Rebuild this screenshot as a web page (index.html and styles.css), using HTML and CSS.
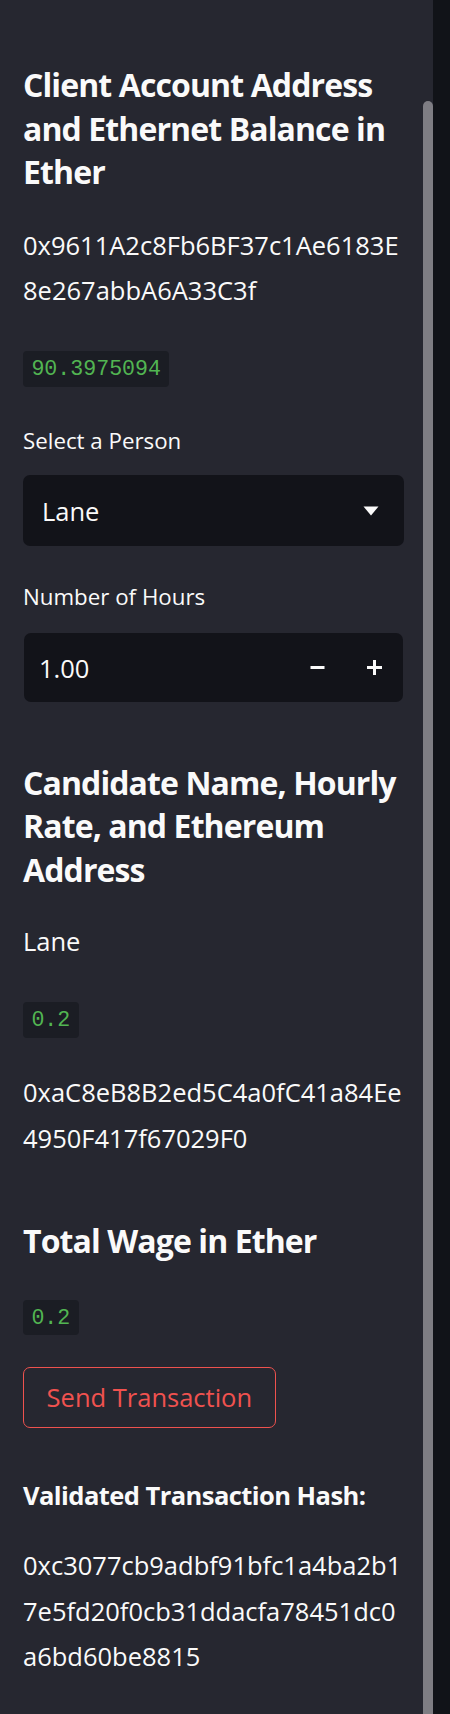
FILE: index.html
```html
<!DOCTYPE html>
<html lang="en">
<head>
<meta charset="utf-8">
<title>Client Account</title>
<link rel="stylesheet" href="styles.css">
</head>
<body>
<div class="app">
  <aside class="sidebar">
    <div class="sidebar-content">
      <h2 class="heading heading-first">Client Account Address<br>and Ethernet Balance in<br>Ether</h2>
      <p class="text addr addr-first">0x9611A2c8Fb6BF37c1Ae6183E<br>8e267abbA6A33C3f</p>
      <div class="code-line code-first"><code class="code">90.3975094</code></div>

      <label class="label label-person">Select a Person</label>
      <div class="select">
        <span class="select-value">Lane</span>
        <svg class="caret" width="16" height="10" viewBox="0 0 16 10"><path d="M0.5 0.5 H15.5 L8 9.5 Z" fill="#fafafa"/></svg>
      </div>

      <label class="label label-hours">Number of Hours</label>
      <div class="number">
        <span class="number-value">1.00</span>
        <span class="step"><svg width="15" height="15" viewBox="0 0 15 15"><rect x="0.5" y="6" width="14" height="3" fill="#fafafa"/></svg></span>
        <span class="step"><svg width="15" height="15" viewBox="0 0 15 15"><rect x="0" y="6" width="15" height="3" fill="#fafafa"/><rect x="6" y="0" width="3" height="15" fill="#fafafa"/></svg></span>
      </div>

      <h2 class="heading heading-candidate">Candidate Name, Hourly<br>Rate, and Ethereum<br>Address</h2>
      <p class="text name">Lane</p>
      <div class="code-line code-rate"><code class="code">0.2</code></div>
      <p class="text addr addr-candidate">0xaC8eB8B2ed5C4a0fC41a84Ee<br>4950F417f67029F0</p>

      <h2 class="heading heading-wage">Total Wage in Ether</h2>
      <div class="code-line code-wage"><code class="code">0.2</code></div>
      <button class="btn" type="button">Send Transaction</button>

      <p class="text strong">Validated Transaction Hash:</p>
      <p class="text addr hash">0xc3077cb9adbf91bfc1a4ba2b1<br>7e5fd20f0cb31ddacfa78451dc0<br>a6bd60be8815</p>
    </div>
    <div class="scroll-track"><div class="scroll-thumb"></div></div>
  </aside>
  <main class="main"></main>
</div>
</body>
</html>
```

FILE: styles.css
```css
* { box-sizing: border-box; }

html, body {
  margin: 0;
  padding: 0;
  background: #111318;
}

.app {
  display: flex;
  width: 450px;
  height: 1714px;
  overflow: hidden;
}

.sidebar {
  width: 433px;
  height: 100%;
  background: #262730;
  display: flex;
}

.sidebar-content {
  flex: 1;
  display: flex;
  flex-direction: column;
  align-items: flex-start;
  padding: 63px 19px 0 23px;
  color: #fafafa;
  font-family: "Open Sans", "Noto Sans", sans-serif;
  font-size: 25.5px;
}

.scroll-track {
  width: 10px;
  display: flex;
  flex-direction: column;
}

.scroll-thumb {
  margin-top: 101px;
  flex: 1;
  background: #7e7d83;
  border-radius: 5px 5px 0 0;
}

.main {
  flex: 1;
  background: #111318;
}

.heading {
  margin: 0;
  font-size: 32px;
  font-weight: 700;
  line-height: 43.5px;
  white-space: nowrap;
  letter-spacing: -0.9px;
}

.text {
  margin: 0;
  line-height: 45.5px;
  white-space: nowrap;
}

.strong { font-weight: 700; letter-spacing: -0.55px; }

.code-line { display: flex; }

.code {
  display: inline-block;
  height: 35.5px;
  line-height: 35.5px;
  padding: 1px 8.4px 0;
  border-radius: 4px;
  background: #1b1d24;
  color: #52b552;
  font-family: "Liberation Mono", "DejaVu Sans Mono", monospace;
  font-size: 21.6px;
}

.label {
  display: block;
  font-size: 22.3px;
  line-height: 36px;
}

.select, .number {
  align-self: stretch;
  display: flex;
  align-items: center;
  background: #121319;
  border-radius: 7px;
}

.select {
  height: 71px;
  padding: 0 25px 0 19px;
}

.select-value { flex: 1; }

.number {
  height: 69px;
  margin-left: 1px;
  margin-right: 1px;
  padding-left: 15px;
}

.number-value { flex: 1; }

.step {
  width: 57px;
  height: 100%;
  display: flex;
  align-items: center;
  justify-content: center;
}

.btn {
  height: 61.4px;
  padding: 0 22.6px;
  background: #262730;
  border: 1px solid #ee524e;
  border-radius: 7px;
  color: #f0524f;
  font-family: "Open Sans", "Noto Sans", sans-serif;
  font-size: 25.5px;
  line-height: 1;
}

/* vertical rhythm */
.addr-first { margin-top: 29px; }
.code-first { margin-top: 37.5px; }
.label-person { margin-top: 36px; }
.select { margin-top: 16.7px; }
.label-hours { margin-top: 33px; }
.number { margin-top: 18px; }
.heading-candidate { margin-top: 58.8px; }
.name { margin-top: 27.3px; }
.code-rate { margin-top: 38.2px; }
.addr-candidate { margin-top: 32.3px; }
.heading-wage { margin-top: 58.2px; }
.code-wage { margin-top: 36.6px; }
.btn { margin-top: 32px; }
.strong { margin-top: 44.6px; }
.hash { margin-top: 24.5px; }
```
